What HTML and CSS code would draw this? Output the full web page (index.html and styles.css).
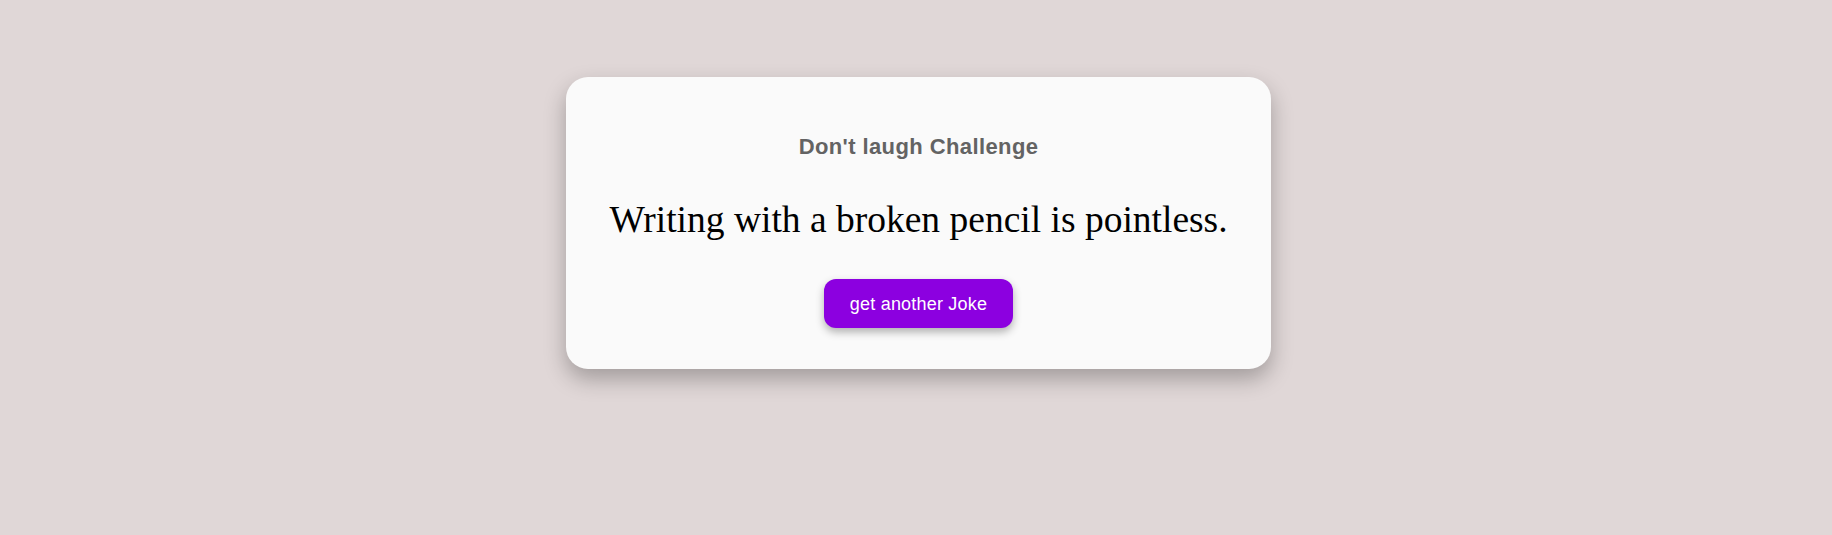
FILE: index.html
```html
<!DOCTYPE html>
<html lang="en">
<head>
<meta charset="utf-8">
<title>Don't laugh Challenge</title>
<link rel="stylesheet" href="styles.css">
</head>
<body>
  <main class="page">
    <section class="card">
      <h3 class="title">Don't laugh Challenge</h3>
      <p class="joke">Writing with a broken pencil is pointless.</p>
      <button class="btn" type="button">get another Joke</button>
    </section>
  </main>
</body>
</html>
```

FILE: styles.css
```css
html, body {
  margin: 0;
  padding: 0;
}

body {
  background: #e0d7d7;
  min-height: 535px;
}

.page {
  display: flex;
  justify-content: center;
  padding-top: 77px;
  padding-left: 5px;
}

.card {
  background: #fafafa;
  border-radius: 22px;
  box-shadow: 0 10px 22px rgba(0, 0, 0, 0.28);
  padding: 57px 43px 41px;
  display: flex;
  flex-direction: column;
  align-items: center;
}

.title {
  margin: 0;
  font-family: "Liberation Sans", Arial, sans-serif;
  font-weight: bold;
  font-size: 22px;
  letter-spacing: 0.4px;
  line-height: 26px;
  color: #636363;
}

.joke {
  margin: 39px 0 0;
  font-family: "Liberation Serif", "Times New Roman", serif;
  font-size: 37.5px;
  line-height: 42px;
  color: #000;
}

.btn {
  margin-top: 38px;
  font-family: "Liberation Sans", Arial, sans-serif;
  font-size: 18px;
  letter-spacing: 0.2px;
  line-height: 20px;
  color: #fff;
  background: #8c00e0;
  border: none;
  border-radius: 12px;
  padding: 15px 26px 14px;
  box-shadow: 0 4px 8px rgba(0, 0, 0, 0.3);
}
```
